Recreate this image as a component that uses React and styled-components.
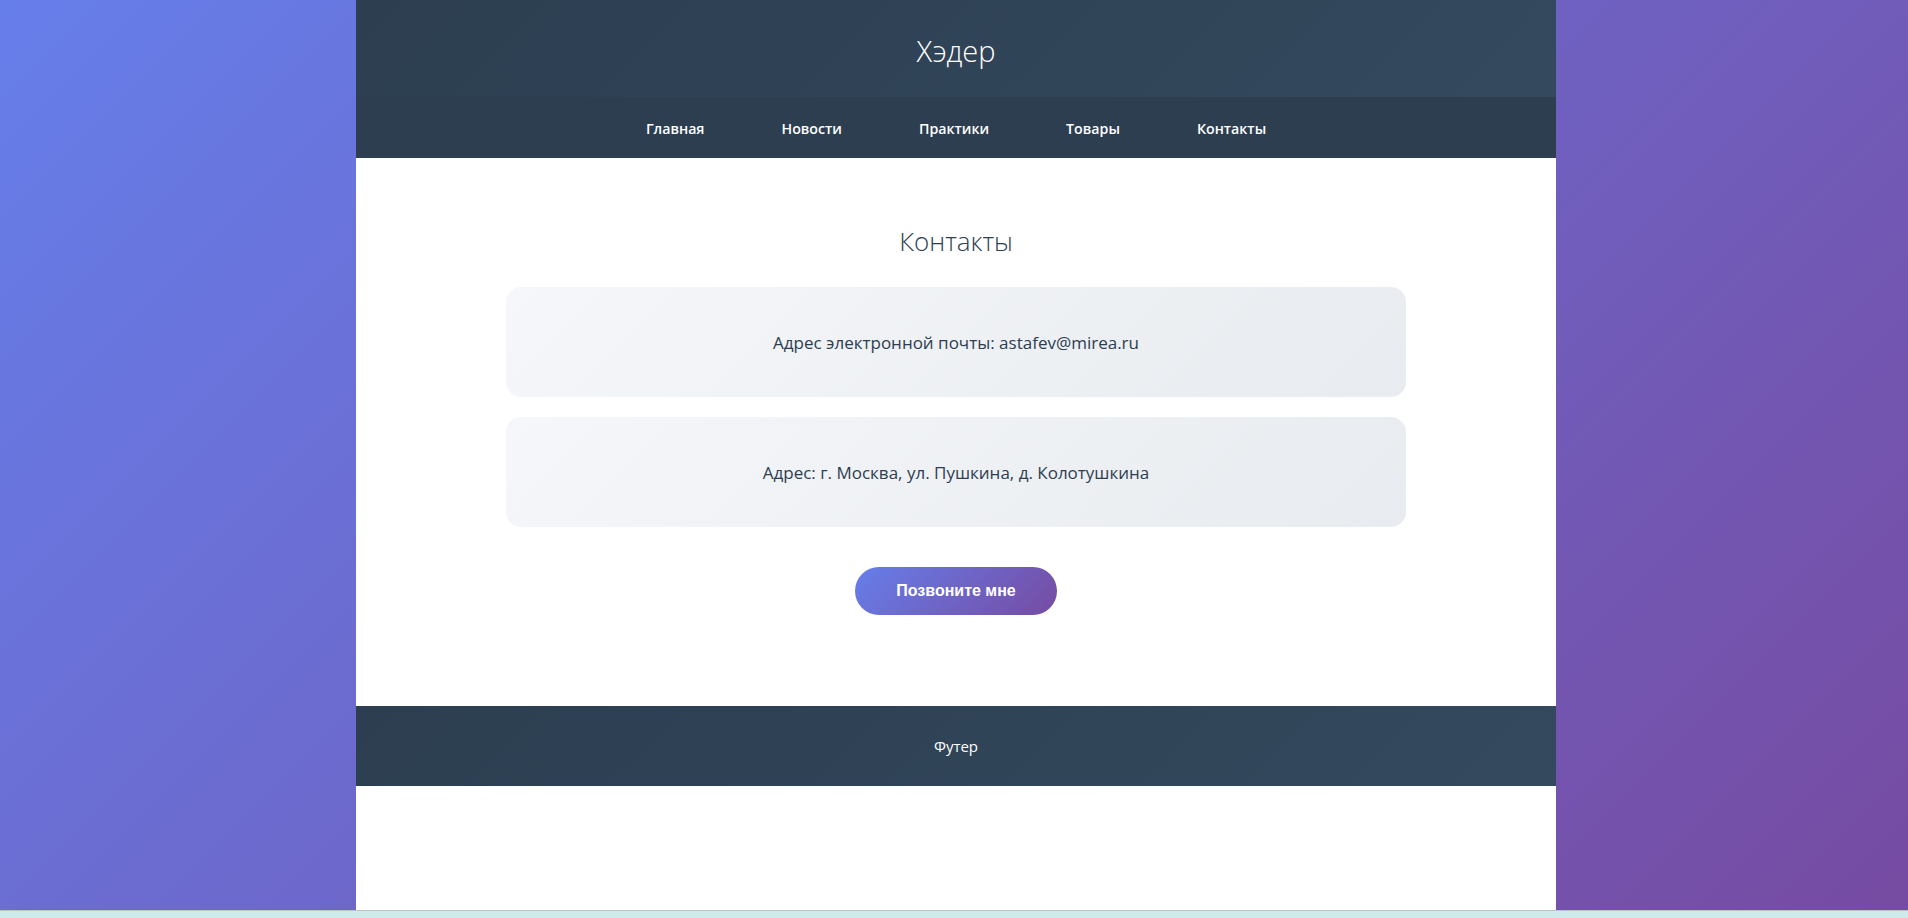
import React from "react";
import styled, { createGlobalStyle } from "styled-components";

const Global = createGlobalStyle`
  html, body { margin: 0; padding: 0; }
  body {
    font-family: "Open Sans", "Noto Sans", sans-serif;
    background: #cfeaea;
  }
`;

const Page = styled.div`
  height: 911px;
  display: flex;
  justify-content: center;
  padding-left: 4px;
  box-sizing: border-box;
  background: linear-gradient(135deg, #667eea 0%, #764ba2 100%);
  border-bottom: 1px solid #b8c4c4;
`;

const Container = styled.div`
  width: 1200px;
  background: #ffffff;
  display: flex;
  flex-direction: column;
`;

const Header = styled.header`
  height: 97px;
  display: flex;
  align-items: center;
  justify-content: center;
  background: linear-gradient(135deg, #2c3e50 0%, #34495e 100%);
`;

const Title = styled.h1`
  margin: 0;
  font-size: 29px;
  font-weight: 300;
  color: #ffffff;
  padding-top: 4px;
`;

const Nav = styled.nav`
  height: 61px;
  background: #2c3e50;
  display: flex;
  align-items: center;
  justify-content: center;
  gap: 77px;
`;

const NavLink = styled.a`
  color: #ffffff;
  font-size: 14.2px;
  font-weight: 600;
  text-decoration: none;
  padding-top: 2px;
`;

const Main = styled.main`
  flex: 0 0 548px;
  display: flex;
  flex-direction: column;
  align-items: center;
  padding-top: 63px;
  box-sizing: border-box;
`;

const SectionTitle = styled.h2`
  margin: 0 0 26px;
  font-size: 26px;
  font-weight: 300;
  color: #2c3e50;
  line-height: 40px;
`;

const Card = styled.div`
  width: 900px;
  height: 110px;
  margin-bottom: 20px;
  border-radius: 15px;
  background: linear-gradient(135deg, #f5f7fa 0%, #e8ebef 100%);
  display: flex;
  align-items: center;
  justify-content: center;
  font-size: 17px;
  color: #2c3e50;
`;

const CallButton = styled.button`
  margin-top: 20px;
  width: 202px;
  height: 48px;
  border: none;
  border-radius: 24px;
  background: linear-gradient(135deg, #667eea 0%, #764ba2 100%);
  color: #ffffff;
  font-family: "Liberation Sans", Arial, sans-serif;
  font-weight: 700;
  font-size: 16px;
  cursor: pointer;
`;

const Footer = styled.footer`
  height: 80px;
  display: flex;
  align-items: center;
  justify-content: center;
  background: linear-gradient(135deg, #2c3e50 0%, #34495e 100%);
  color: #ffffff;
  font-size: 15px;
`;

const navItems = ["Главная", "Новости", "Практики", "Товары", "Контакты"];

export default function App() {
  return (
    <>
      <Global />
      <Page>
        <Container>
          <Header>
            <Title>Хэдер</Title>
          </Header>
          <Nav>
            {navItems.map((n) => (
              <NavLink key={n} href="#">{n}</NavLink>
            ))}
          </Nav>
          <Main>
            <SectionTitle>Контакты</SectionTitle>
            <Card>Адрес электронной почты: astafev@mirea.ru</Card>
            <Card>Адрес: г. Москва, ул. Пушкина, д. Колотушкина</Card>
            <CallButton>Позвоните мне</CallButton>
          </Main>
          <Footer>Футер</Footer>
        </Container>
      </Page>
    </>
  );
}
